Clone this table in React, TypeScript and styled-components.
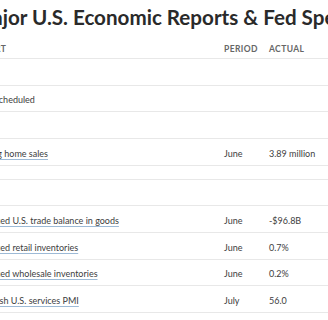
import styled, { createGlobalStyle } from "styled-components";

const GlobalStyle = createGlobalStyle`
  html, body {
    margin: 0;
    padding: 0;
    background: #fff;
    overflow: hidden;
  }
  body {
    font-family: Lato, "Open Sans", sans-serif;
    color: #333;
  }
`;

type Report = {
  time: string;
  name: string;
  period: string;
  actual: string;
  forecast: string;
  previous: string;
};

type Day = {
  date: string;
  reports: Report[];
  spacer?: boolean;
};

const days: Day[] = [
  { date: "Monday, July 22", reports: [] },
  {
    date: "Tuesday, July 23",
    reports: [
      {
        time: "10:00 am",
        name: "Existing home sales",
        period: "June",
        actual: "3.89 million",
        forecast: "4.00 million",
        previous: "4.11 million",
      },
    ],
  },
  {
    date: "Wednesday, July 24",
    spacer: true,
    reports: [
      {
        time: "8:30 am",
        name: "Advanced U.S. trade balance in goods",
        period: "June",
        actual: "-$96.8B",
        forecast: "--",
        previous: "-$99.4B",
      },
      {
        time: "8:30 am",
        name: "Advanced retail inventories",
        period: "June",
        actual: "0.7%",
        forecast: "--",
        previous: "0.7%",
      },
      {
        time: "8:30 am",
        name: "Advanced wholesale inventories",
        period: "June",
        actual: "0.2%",
        forecast: "--",
        previous: "0.6%",
      },
      {
        time: "9:45 am",
        name: "S&P flash U.S. services PMI",
        period: "July",
        actual: "56.0",
        forecast: "54.8",
        previous: "55.3",
      },
    ],
  },
];

const App = () => {
  return (
    <Page>
      <GlobalStyle />
      <Title>Major U.S. Economic Reports &amp; Fed Speakers</Title>
      <Table>
        <HeadRow>
          <span>Time (ET)</span>
          <span>Report</span>
          <span>Period</span>
          <span>Actual</span>
          <span>Median forecast</span>
          <span>Previous</span>
        </HeadRow>
        {days.map((day) => (
          <div key={day.date}>
            {day.spacer && <Row $height={14} />}
            <Row>
              <DateCell>{day.date}</DateCell>
            </Row>
            {day.reports.length === 0 ? (
              <Row>
                <span />
                <span>None scheduled</span>
              </Row>
            ) : (
              day.reports.map((r) => (
                <Row key={r.name}>
                  <span>{r.time}</span>
                  <span>
                    <ReportLink href="#">{r.name}</ReportLink>
                  </span>
                  <span>{r.period}</span>
                  <span>{r.actual}</span>
                  <span>{r.forecast}</span>
                  <span>{r.previous}</span>
                </Row>
              ))
            )}
          </div>
        ))}
      </Table>
    </Page>
  );
};

export default App;

const Page = styled.div`
  width: 640px;
  margin-left: -30px;
  padding-top: 3px;
`;

const Title = styled.h2`
  margin: 0;
  padding-left: 3px;
  font-size: 20.6px;
  line-height: 28px;
  font-weight: 700;
  color: #2a2a2a;
  white-space: nowrap;
`;

const columns = "80px 253px 45px 70px 100px 80px";

const Table = styled.div`
  margin-left: -79px;
`;

const HeadRow = styled.div`
  display: grid;
  grid-template-columns: ${columns};
  align-items: end;
  box-sizing: border-box;
  height: 28px;
  padding-bottom: 4px;
  border-bottom: 1px solid #e8e8e8;
  font-size: 8.5px;
  font-weight: 700;
  letter-spacing: 0.4px;
  text-transform: uppercase;
  color: #666;
  white-space: nowrap;
`;

const Row = styled.div<{ $height?: number }>`
  display: grid;
  grid-template-columns: ${columns};
  align-items: center;
  box-sizing: border-box;
  height: ${(p) => p.$height ?? 26.67}px;
  padding-top: 3px;
  border-bottom: 1px solid #e8e8e8;
  font-size: 9px;
  color: #3d3d3d;
  white-space: nowrap;
`;

const DateCell = styled.span`
  font-weight: 700;
  text-transform: uppercase;
  font-size: 8.5px;
  color: #555;
`;

const ReportLink = styled.a`
  color: #3d3d3d;
  text-decoration: underline;
  text-decoration-color: #9dbad6;
  text-underline-offset: 2px;
`;
